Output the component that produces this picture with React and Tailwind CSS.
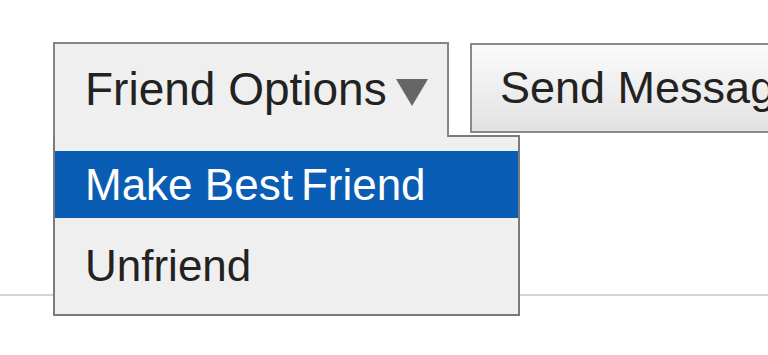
import React from 'react'

const font = { fontFamily: '"Liberation Sans", Arial, sans-serif' }

const App = () => {
    return (
        <div className="relative h-[355px] w-[768px] overflow-hidden bg-white" style={font}>
            {/* page divider line */}
            <div className="absolute left-0 right-0 top-[294px] h-[2px] bg-[#d4d4d4]" />

            <div className="relative flex items-start gap-[21px] pl-[53px] pt-[42px]">
                {/* Friend Options dropdown */}
                <div className="relative shrink-0">
                    <div className="relative z-10 flex h-[95px] w-[396px] items-start border-2 border-b-0 border-[#858585] bg-[#efefef] pl-[30px] pt-[17px] text-[46px] leading-[56px] text-[#222]">
                        <span>Friend Options</span>
                        <span className="ml-[9px] mt-[18px] h-0 w-0 border-x-[16px] border-t-[27px] border-x-transparent border-t-[#666]" />
                    </div>
                    <div className="absolute left-0 top-[93px] w-[467px] border-2 border-[#7a7a7a] bg-[#efefef] pt-[14px] text-[44px]">
                        <div className="flex h-[67px] items-center bg-[#0a5db5] pl-[30px] text-white">
                            Make Best<span className="ml-[8px]">Friend</span>
                        </div>
                        <div className="flex h-[96px] items-center pl-[30px] text-[#222]">
                            Unfriend
                        </div>
                    </div>
                </div>

                {/* Send Message button */}
                <button className="mt-[1px] flex h-[90px] w-[340px] shrink-0 items-center border-2 border-[#8a8a8a] bg-gradient-to-b from-[#fbfbfb] to-[#e2e2e2] pl-[28px] text-left text-[45px] text-[#222]">
                    Send Message
                </button>
            </div>
        </div>
    )
}

export default App
